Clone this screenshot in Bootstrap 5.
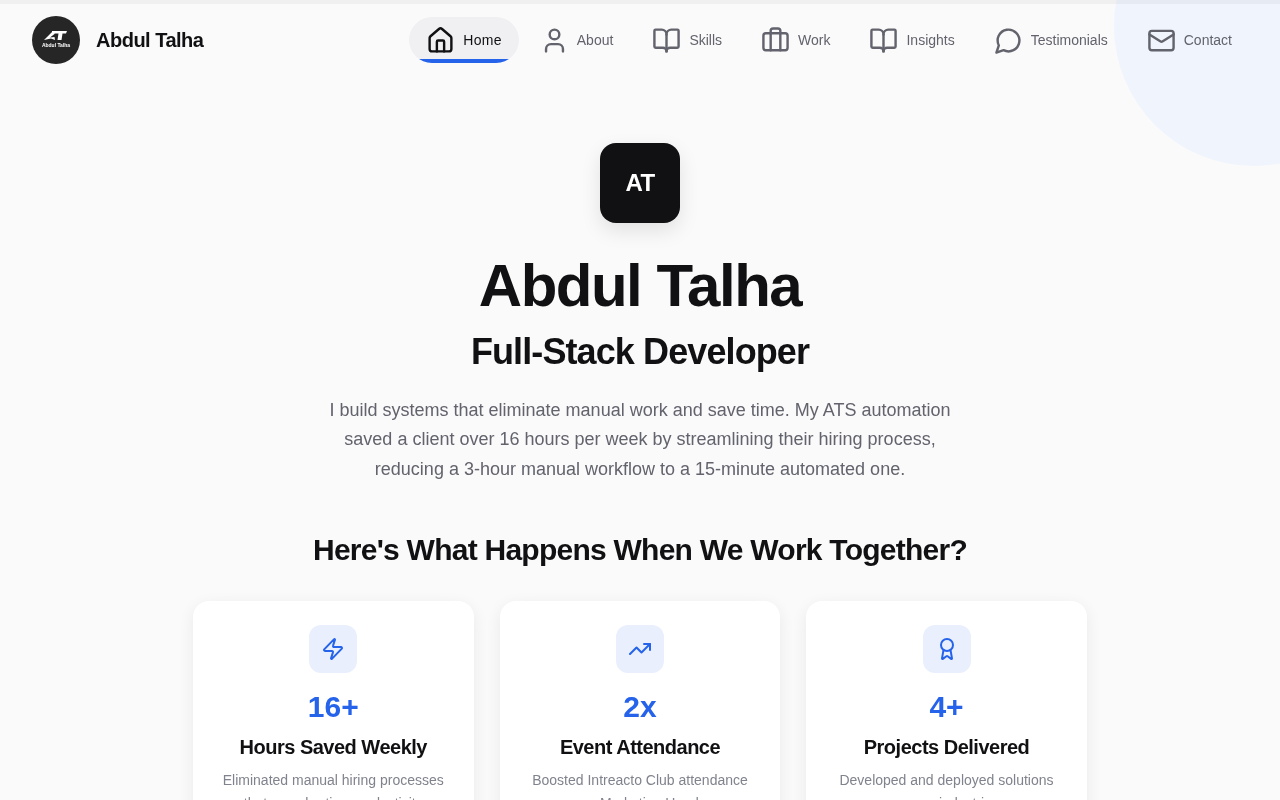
<!DOCTYPE html>
<html lang="en">
<head>
    <meta charset="UTF-8">
    <meta name="viewport" content="width=device-width, initial-scale=1.0">
    <title>Abdul Talha</title>
    <link href="https://cdn.jsdelivr.net/npm/bootstrap@5.3.0/dist/css/bootstrap.min.css" rel="stylesheet">
    <style>
        html, body { height: 100%; overflow: hidden; }
        body {
            background-color: #fafafa;
            font-family: "Liberation Sans", Arial, sans-serif;
            color: #111113;
            position: relative;
        }
        .top-strip { height: 4px; background: rgba(0, 0, 0, 0.04); }
        .corner-blob {
            position: absolute; top: -114px; left: 1114px;
            width: 280px; height: 280px; border-radius: 50%;
            background: #f0f4fd;
        }
        .site-header { height: 72px; padding: 0 32px; position: relative; will-change: transform; }
        .brand-logo { width: 48px; height: 48px; border-radius: 50%; background: #262626; }
        .brand-name { font-size: 20px; font-weight: 700; letter-spacing: -0.5px; margin-left: 16px; color: #111113; }
        .main-nav { gap: 7px; }
        .nav-item-link {
            display: flex; align-items: center; gap: 8px; height: 46px; padding: 0 16px;
            font-size: 14px; color: #62636c; text-decoration: none; border-radius: 23px;
            position: relative; overflow: hidden;
        }
        .nav-item-link svg { width: 29px; height: 29px; fill: none; stroke: currentColor; stroke-width: 2; stroke-linecap: round; stroke-linejoin: round; flex: none; }
        .nav-item-link.is-active { background: #f0f0f3; color: #111113; letter-spacing: 0.3px; padding: 0 17px; margin-right: -2px; }
        .nav-item-link.is-active::after {
            content: ""; position: absolute; left: 0; right: 0; bottom: 0; height: 4px; background: #2563eb;
        }
        .hero { position: relative; padding-top: 67px; text-align: center; will-change: transform; }
        .hero-badge {
            width: 80px; height: 80px; border-radius: 16px; background: #111113; color: #fff;
            font-size: 24px; font-weight: 700; letter-spacing: -0.6px;
            box-shadow: 0 8px 20px rgba(0,0,0,.1);
        }
        .hero-title { font-size: 60px; line-height: 66px; font-weight: 700; letter-spacing: -1.5px; margin: 30px 0 0; }
        .hero-role { font-size: 36px; line-height: 44px; font-weight: 700; letter-spacing: -0.9px; margin: 11px 0 0; }
        .hero-text { width: 640px; font-size: 18px; line-height: 29.25px; color: #62636c; margin: 22px auto 0; }
        .together { font-size: 30px; line-height: 36px; font-weight: 700; letter-spacing: -0.75px; margin: 48px 0 0; }
        .stats { width: 894px; margin: 33px 0 0 192.5px; display: grid; grid-template-columns: 281.5px 280px 281px; column-gap: 26px; }
        .stat-card {
            background: #fff; border-radius: 16px; padding: 24px 24px; text-align: center; height: 260px;
            box-shadow: 0 4px 16px rgba(0,0,0,.07);
        }
        .stat-icon { width: 48px; height: 48px; border-radius: 12px; background: #e9effd; margin: 0 auto; color: #2563eb; }
        .stat-icon svg { width: 24px; height: 24px; fill: none; stroke: currentColor; stroke-width: 2; stroke-linecap: round; stroke-linejoin: round; }
        .stat-num { font-size: 30px; line-height: 36px; font-weight: 700; color: #2563eb; margin-top: 16px; }
        .stat-title { font-size: 20px; line-height: 28px; font-weight: 700; letter-spacing: -0.5px; color: #111113; margin: 8px 0 0; }
        .stat-text { font-size: 14px; line-height: 22.75px; color: #80838d; margin: 8px 0 0; }
    </style>
</head>
<body>
    <div class="corner-blob"></div>
    <div class="top-strip position-relative"></div>
    <header class="site-header d-flex align-items-center justify-content-between">
        <div class="d-flex align-items-center">
            <div class="brand-logo d-flex align-items-center justify-content-center">
                <svg width="32" height="24" viewBox="0 0 32 24">
                    <path d="M4 12 L13 3 L15 3 L14.5 6 L10 9.5 L14.5 9 L15 12 L11 10.5 Z M12 3 H27 L26 5.5 H22.5 L21.5 12 H17.5 L18.5 5.5 H12 Z" fill="#fff"/>
                    <text x="16" y="19" text-anchor="middle" fill="#fff" font-size="5" font-weight="700" font-family="Liberation Sans">Abdul Talha</text>
                </svg>
            </div>
            <span class="brand-name">Abdul Talha</span>
        </div>
        <nav class="main-nav d-flex align-items-center">
            <a class="nav-item-link is-active" href="#"><svg viewBox="0 0 24 24"><path d="M15 21v-8a1 1 0 0 0-1-1h-4a1 1 0 0 0-1 1v8"/><path d="M3 10a2 2 0 0 1 .709-1.528l7-5.999a2 2 0 0 1 2.582 0l7 5.999A2 2 0 0 1 21 10v9a2 2 0 0 1-2 2H5a2 2 0 0 1-2-2z"/></svg>Home</a>
            <a class="nav-item-link" href="#"><svg viewBox="0 0 24 24"><path d="M19 21v-2a4 4 0 0 0-4-4H9a4 4 0 0 0-4 4v2"/><circle cx="12" cy="7" r="4"/></svg>About</a>
            <a class="nav-item-link" href="#"><svg viewBox="0 0 24 24"><path d="M12 7v14"/><path d="M3 18a1 1 0 0 1-1-1V4a1 1 0 0 1 1-1h5a4 4 0 0 1 4 4 4 4 0 0 1 4-4h5a1 1 0 0 1 1 1v13a1 1 0 0 1-1 1h-6a3 3 0 0 0-3 3 3 3 0 0 0-3-3z"/></svg>Skills</a>
            <a class="nav-item-link" href="#"><svg viewBox="0 0 24 24"><path d="M16 20V4a2 2 0 0 0-2-2h-4a2 2 0 0 0-2 2v16"/><rect x="2" y="6" width="20" height="14" rx="2"/></svg>Work</a>
            <a class="nav-item-link" href="#"><svg viewBox="0 0 24 24"><path d="M12 7v14"/><path d="M3 18a1 1 0 0 1-1-1V4a1 1 0 0 1 1-1h5a4 4 0 0 1 4 4 4 4 0 0 1 4-4h5a1 1 0 0 1 1 1v13a1 1 0 0 1-1 1h-6a3 3 0 0 0-3 3 3 3 0 0 0-3-3z"/></svg>Insights</a>
            <a class="nav-item-link" href="#"><svg viewBox="0 0 24 24"><path d="M7.9 20A9 9 0 1 0 4 16.1L2 22Z"/></svg>Testimonials</a>
            <a class="nav-item-link" href="#"><svg viewBox="0 0 24 24"><rect x="2" y="4" width="20" height="16" rx="2"/><path d="m22 7-8.97 5.7a1.94 1.94 0 0 1-2.06 0L2 7"/></svg>Contact</a>
        </nav>
    </header>
    <main class="hero">
        <div class="hero-badge d-flex align-items-center justify-content-center mx-auto">AT</div>
        <h1 class="hero-title">Abdul Talha</h1>
        <h2 class="hero-role">Full-Stack Developer</h2>
        <p class="hero-text">I build systems that eliminate manual work and save time. My ATS automation saved a client over 16 hours per week by streamlining their hiring process, reducing a 3-hour manual workflow to a 15-minute automated one.</p>
        <h2 class="together">Here's What Happens When We Work Together?</h2>
        <div class="stats">
            <div class="stat-card">
                <div class="stat-icon d-flex align-items-center justify-content-center"><svg viewBox="0 0 24 24"><path d="M4 14a1 1 0 0 1-.78-1.63l9.9-10.2a.5.5 0 0 1 .86.46l-1.92 6.02A1 1 0 0 0 13 10h7a1 1 0 0 1 .78 1.63l-9.9 10.2a.5.5 0 0 1-.86-.46l1.92-6.02A1 1 0 0 0 11 14z"/></svg></div>
                <div class="stat-num">16+</div>
                <h3 class="stat-title">Hours Saved Weekly</h3>
                <p class="stat-text">Eliminated manual hiring processes that were hurting productivity</p>
            </div>
            <div class="stat-card">
                <div class="stat-icon d-flex align-items-center justify-content-center"><svg viewBox="0 0 24 24"><path d="M16 7h6v6"/><path d="m22 7-8.5 8.5-5-5L2 17"/></svg></div>
                <div class="stat-num">2x</div>
                <h3 class="stat-title">Event Attendance</h3>
                <p class="stat-text">Boosted Intreacto Club attendance as Marketing Head</p>
            </div>
            <div class="stat-card">
                <div class="stat-icon d-flex align-items-center justify-content-center"><svg viewBox="0 0 24 24"><path d="m15.477 12.89 1.515 8.526a.5.5 0 0 1-.81.47l-3.58-2.687a1 1 0 0 0-1.197 0l-3.586 2.686a.5.5 0 0 1-.81-.469l1.514-8.526"/><circle cx="12" cy="8" r="6"/></svg></div>
                <div class="stat-num">4+</div>
                <h3 class="stat-title">Projects Delivered</h3>
                <p class="stat-text">Developed and deployed solutions across industries</p>
            </div>
        </div>
    </main>
    <script src="https://cdn.jsdelivr.net/npm/bootstrap@5.3.0/dist/js/bootstrap.bundle.min.js"></script>
</body>
</html>
